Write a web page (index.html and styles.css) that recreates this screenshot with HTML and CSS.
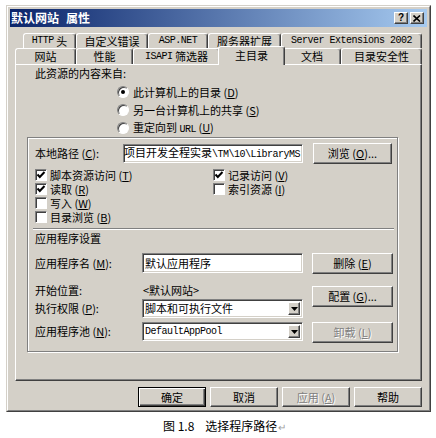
FILE: index.html
```html
<!DOCTYPE html>
<html lang="zh-CN">
<head>
<meta charset="utf-8">
<title>默认网站 属性</title>
<link rel="stylesheet" href="styles.css">
</head>
<body>
<div class="window">
  <div class="frame">
    <div class="titlebar">
      <span class="title">默认网站<span class="tgap"></span>属性</span>
      <div class="tbtns">
        <span class="tbb help">?</span>
        <span class="tbb close"><svg width="8" height="7" viewBox="0 0 8 7"><path d="M0.5 0.5 L7 6.5 M7 0.5 L0.5 6.5" stroke="#000" stroke-width="1.6"/></svg></span>
      </div>
    </div>
    <div class="content">
      <div class="tabrow back">
        <div class="tab w-http"><span class="m">HTTP</span>&nbsp;头</div>
        <div class="tab w-err">自定义错误</div>
        <div class="tab w-asp"><span class="m">ASP.NET</span></div>
        <div class="tab w-ext">服务器扩展</div>
        <div class="tab w-se"><span class="m">Server Extensions 2002</span></div>
      </div>
      <div class="tabrow front">
        <div class="tab w-site">网站</div>
        <div class="tab w-perf">性能</div>
        <div class="tab w-isapi"><span class="m">ISAPI</span>&nbsp;筛选器</div>
        <div class="tab w-home sel">主目录</div>
        <div class="tab w-doc">文档</div>
        <div class="tab w-sec">目录安全性</div>
      </div>
      <div class="panel">
        <div class="src">此资源的内容来自:</div>
        <div class="radios">
          <div class="rrow"><span class="radio on"><span class="dot"></span></span><span>此计算机上的目录 (<u>D</u>)</span></div>
          <div class="rrow"><span class="radio"></span><span>另一台计算机上的共享 (<u>S</u>)</span></div>
          <div class="rrow"><span class="radio"></span><span>重定向到 <span class="m">URL</span> (<u>U</u>)</span></div>
        </div>
        <div class="group">
          <div class="prow">
            <span class="plabel">本地路径 (<u>C</u>):</span>
            <div class="textbox path"><span class="ptext">\项目开发全程实录<span class="m">\TM\10\LibraryMS</span></span></div>
            <div class="btn browse">浏览 (<u>O</u>)...</div>
          </div>
          <div class="checks">
            <div class="ccol left">
              <div class="chk"><span class="cbox"><svg width="10" height="10" viewBox="0 0 10 10"><polyline points="1.5,4.5 3.8,7 8.5,2" fill="none" stroke="#000" stroke-width="2"/></svg></span><span>脚本资源访问 (<u>T</u>)</span></div>
              <div class="chk"><span class="cbox"><svg width="10" height="10" viewBox="0 0 10 10"><polyline points="1.5,4.5 3.8,7 8.5,2" fill="none" stroke="#000" stroke-width="2"/></svg></span><span>读取 (<u>R</u>)</span></div>
              <div class="chk"><span class="cbox"></span><span>写入 (<u>W</u>)</span></div>
              <div class="chk"><span class="cbox"></span><span>目录浏览 (<u>B</u>)</span></div>
            </div>
            <div class="ccol">
              <div class="chk"><span class="cbox"><svg width="10" height="10" viewBox="0 0 10 10"><polyline points="1.5,4.5 3.8,7 8.5,2" fill="none" stroke="#000" stroke-width="2"/></svg></span><span>记录访问 (<u>V</u>)</span></div>
              <div class="chk"><span class="cbox"></span><span>索引资源 (<u>I</u>)</span></div>
            </div>
          </div>
          <div class="sep"></div>
          <div class="apphead">应用程序设置</div>
          <div class="app">
            <div class="fields">
              <div class="frow r1"><span class="flabel">应用程序名 (<u>M</u>):</span><div class="textbox field">默认应用程序</div></div>
              <div class="frow r2"><span class="flabel">开始位置:</span><span class="fval">&lt;默认网站&gt;</span></div>
              <div class="frow r3"><span class="flabel">执行权限 (<u>P</u>):</span><div class="textbox field select"><span class="stext">脚本和可执行文件</span><span class="arrow"><svg width="7" height="4" viewBox="0 0 7 4"><polygon points="0,0 7,0 3.5,4" fill="#000"/></svg></span></div></div>
              <div class="frow r4"><span class="flabel">应用程序池 (<u>N</u>):</span><div class="textbox field select"><span class="stext m">DefaultAppPool</span><span class="arrow"><svg width="7" height="4" viewBox="0 0 7 4"><polygon points="0,0 7,0 3.5,4" fill="#000"/></svg></span></div></div>
            </div>
            <div class="abtns">
              <div class="btn abtn b1">删除 (<u>E</u>)</div>
              <div class="btn abtn b2">配置 (<u>G</u>)...</div>
              <div class="btn abtn b3 disabled">卸载 (<u>L</u>)</div>
            </div>
          </div>
        </div>
      </div>
      <div class="buttons">
        <div class="btn dbtn default">确定</div>
        <div class="btn dbtn">取消</div>
        <div class="btn dbtn wide disabled">应用 (<u>A</u>)</div>
        <div class="btn dbtn">帮助</div>
      </div>
    </div>
  </div>
</div>
<div class="caption"><span>图 1.8</span><span class="cgap"></span><span>选择程序路径</span><span class="ret">↵</span></div>
</body>
</html>
```
FILE: styles.css
```css
* { box-sizing: border-box; }

body {
  margin: 0;
  width: 436px;
  height: 438px;
  overflow: hidden;
  background: #ffffff;
  color: #000;
  font-family: "Noto Sans CJK SC", "Noto Sans", sans-serif;
  font-size: 11px;
  line-height: 13px;
}

u { text-decoration: underline; text-underline-offset: 1px; }

.m {
  font-family: "Liberation Mono", "DejaVu Sans Mono", monospace;
  font-size: 10px;
  letter-spacing: -0.5px;
}

.window {
  margin: 5px 0 0 6px;
  width: 425px;
  height: 407px;
  background: #d4d0c8;
  border: 1px solid;
  border-color: #d4d0c8 #404040 #404040 #d4d0c8;
}

.frame {
  height: 100%;
  border: 1px solid;
  border-color: #ffffff #808080 #808080 #ffffff;
  padding: 2px;
  display: flex;
  flex-direction: column;
}

.titlebar {
  height: 18px;
  flex: none;
  background: linear-gradient(to right, #0a246a, #a6caf0);
  display: flex;
  align-items: center;
  justify-content: space-between;
  padding: 0 3px 0 1px;
}

.title {
  color: #fff;
  font-weight: bold;
  font-size: 12px;
  line-height: 18px;
  display: flex;
}
.tgap { width: 7px; }

.tbtns { display: flex; gap: 2px; }

.tbb {
  width: 14px;
  height: 12px;
  background: #d4d0c8;
  border: 1px solid;
  border-color: #ffffff #404040 #404040 #ffffff;
  box-shadow: inset -1px -1px #808080;
  display: flex;
  align-items: center;
  justify-content: center;
  font-family: "Liberation Sans", sans-serif;
  font-weight: bold;
  font-size: 10px;
  line-height: 1;
}

.content {
  flex: 1;
  padding: 6px 5px 0 5px;
}

.tabrow { display: flex; }
.back { margin-left: 8px; height: 15px; }
.front { height: 16px; align-items: flex-start; }

.tab {
  height: 100%;
  border: 1px solid;
  border-bottom: none;
  border-color: #ffffff #404040 transparent #ffffff;
  box-shadow: inset -1px 0 #808080;
  border-radius: 3px 3px 0 0;
  display: flex;
  align-items: center;
  justify-content: center;
  white-space: nowrap;
  line-height: 1;
  background: #d4d0c8;
}
.front .tab { height: 16px; }

.w-http { width: 53px; }
.w-err { width: 72px; }
.w-asp { width: 60px; }
.w-ext { width: 73px; }
.w-se { width: 141px; }
.w-site { width: 61px; }
.w-perf { width: 57px; }
.w-isapi { width: 87px; }
.w-home { width: 63px; }
.w-doc { width: 58px; }
.w-sec { width: 81px; }

.front .tab.sel {
  width: 67px;
  height: 19px;
  margin: -2px -2px 0 -2px;
  position: relative;
  z-index: 1;
  padding-bottom: 2px;
}

.panel {
  height: 317px;
  border: 1px solid;
  border-color: #ffffff #404040 #404040 #ffffff;
  box-shadow: inset -1px -1px #808080;
}

.src { margin: 1px 0 0 19px; line-height: 14px; }

.radios { margin: 3px 0 0 101px; }
.rrow {
  height: 18px;
  display: flex;
  align-items: center;
  gap: 4px;
  white-space: nowrap;
}
.radio {
  width: 12px;
  height: 12px;
  border-radius: 50%;
  background: #fff;
  border: 1px solid;
  border-color: #808080 #ffffff #ffffff #808080;
  box-shadow: inset 1px 1px #404040;
  display: flex;
  align-items: center;
  justify-content: center;
}
.dot { width: 4px; height: 4px; border-radius: 50%; background: #000; }

.group {
  margin-left: 11px;
  width: 371px;
  height: 215px;
  border: 1px solid #808080;
  box-shadow: inset 1px 1px #ffffff, 1px 1px #ffffff;
}

.prow {
  margin: 5px 0 0 7px;
  height: 21px;
  display: flex;
  align-items: center;
}
.plabel { width: 88px; white-space: nowrap; }

.textbox {
  background: #fff;
  border: 1px solid;
  border-color: #808080 #ffffff #ffffff #808080;
  box-shadow: inset 1px 1px #404040, inset -1px -1px #d4d0c8;
  display: flex;
  align-items: center;
  white-space: nowrap;
  overflow: hidden;
}
.path {
  width: 180px;
  height: 19px;
  justify-content: flex-end;
  padding-right: 2px;
}
.ptext { flex: none; }

.btn {
  background: #d4d0c8;
  border: 1px solid;
  border-color: #ffffff #404040 #404040 #ffffff;
  box-shadow: inset -1px -1px #808080;
  display: flex;
  align-items: center;
  justify-content: center;
  white-space: nowrap;
}
.browse { margin-left: 10px; width: 79px; height: 21px; }

.checks { margin: 4px 0 0 7px; display: flex; }
.ccol.left { width: 178px; }
.chk {
  height: 14px;
  display: flex;
  align-items: center;
  gap: 3px;
  white-space: nowrap;
  line-height: 13px;
}
.cbox {
  width: 12px;
  height: 12px;
  background: #fff;
  border: 1px solid;
  border-color: #808080 #ffffff #ffffff #808080;
  box-shadow: inset 1px 1px #404040;
  display: flex;
  align-items: center;
  justify-content: center;
}

.sep {
  margin: 4px 3px 0 5px;
  height: 2px;
  border-top: 1px solid #808080;
  border-bottom: 1px solid #ffffff;
}

.apphead { margin: 2px 0 0 7px; line-height: 12px; }

.app { margin: 9px 0 0 7px; display: flex; }
.fields { width: 268px; }
.frow { display: flex; align-items: center; white-space: nowrap; }
.flabel { width: 107px; }
.r1 { height: 20px; }
.r2 { height: 18px; margin-top: 8px; }
.r3 { height: 19px; }
.r4 { height: 19px; margin-top: 4px; }
.field { width: 161px; height: 100%; padding-left: 2px; }
.fval { padding-left: 1px; }
.select { justify-content: space-between; padding-right: 2px; }
.arrow {
  width: 12px;
  height: 13px;
  background: #d4d0c8;
  border: 1px solid;
  border-color: #ffffff #404040 #404040 #ffffff;
  box-shadow: inset -1px -1px #808080;
  display: flex;
  align-items: center;
  justify-content: center;
}

.abtns { margin-left: 9px; width: 81px; }
.abtn { height: 21px; }
.b2 { margin-top: 12px; }
.b3 { margin-top: 15px; }

.disabled { color: #808080; text-shadow: 1px 1px #ffffff; }

.buttons {
  margin-top: 6px;
  display: flex;
  justify-content: flex-end;
  gap: 4px;
}
.dbtn { width: 68px; height: 20px; }
.default {
  border: 1px solid #000;
  box-shadow: inset 1px 1px #ffffff, inset -1px -1px #404040, inset -2px -2px #808080;
}

.caption {
  margin-top: 6px;
  padding-left: 163px;
  font-size: 12px;
  line-height: 16px;
  white-space: nowrap;
  display: flex;
  align-items: baseline;
}
.cgap { width: 11px; }
.ret { color: #a0a0a0; font-size: 10px; margin-left: 1px; }
```
